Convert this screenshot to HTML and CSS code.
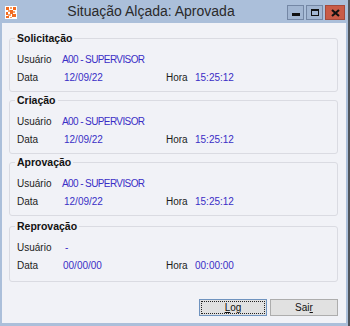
FILE: index.html
```html
<!DOCTYPE html>
<html lang="pt-BR">
<head>
    <meta charset="UTF-8">
    <title>Situação Alçada</title>
    <link rel="stylesheet" href="styles.css">
</head>
<body>

    <div class="window">
        <!-- Title bar -->
        <div class="titlebar">
            <svg class="app-icon" width="12" height="13" viewBox="0 0 12 13">
                <rect width="12" height="13" fill="#fff"/>
                <rect x="1" y="1" width="3" height="3" fill="#f26b21"/>
                <rect x="5" y="1" width="2" height="2" fill="#f7a066"/>
                <rect x="8" y="1" width="3" height="3" fill="#f26b21"/>
                <rect x="3" y="4" width="2" height="2" fill="#f7a066"/>
                <rect x="5" y="4" width="3" height="4" fill="#f26b21"/>
                <rect x="8" y="5" width="2" height="2" fill="#f7a066"/>
                <rect x="1" y="6" width="2" height="3" fill="#f26b21"/>
                <rect x="3" y="8" width="3" height="2" fill="#f7a066"/>
                <rect x="7" y="8" width="4" height="3" fill="#f26b21"/>
                <rect x="1" y="10" width="3" height="2" fill="#f26b21"/>
                <rect x="5" y="11" width="2" height="1" fill="#f7a066"/>
            </svg>
            <div class="title">Situação Alçada: Aprovada</div>
            <div class="caption-buttons">
                <div class="cap-btn"><span class="glyph-min"></span></div>
                <div class="cap-btn"><span class="glyph-max"></span></div>
                <div class="cap-btn close">
                    <svg width="9" height="8" viewBox="0 0 9 8">
                        <path d="M1 1 L8 7 M8 1 L1 7" stroke="#111" stroke-width="2.2"/>
                    </svg>
                </div>
            </div>
        </div>

        <!-- Client area -->
        <div class="client">
            <fieldset class="group">
                <legend>Solicitação</legend>
                <div class="row"><span class="label">Usuário</span><span class="value user">A00 - SUPERVISOR</span></div>
                <div class="row"><span class="label date">Data</span><span class="value date-val">12/09/22</span><span class="label hora">Hora</span><span class="value">15:25:12</span></div>
            </fieldset>

            <fieldset class="group">
                <legend>Criação</legend>
                <div class="row"><span class="label">Usuário</span><span class="value user">A00 - SUPERVISOR</span></div>
                <div class="row"><span class="label date">Data</span><span class="value date-val">12/09/22</span><span class="label hora">Hora</span><span class="value">15:25:12</span></div>
            </fieldset>

            <fieldset class="group">
                <legend>Aprovação</legend>
                <div class="row"><span class="label">Usuário</span><span class="value user">A00 - SUPERVISOR</span></div>
                <div class="row"><span class="label date">Data</span><span class="value date-val">12/09/22</span><span class="label hora">Hora</span><span class="value">15:25:12</span></div>
            </fieldset>

            <fieldset class="group last">
                <legend>Reprovação</legend>
                <div class="row"><span class="label">Usuário</span><span class="value dash">-</span></div>
                <div class="row"><span class="label date">Data</span><span class="value date-val zero">00/00/00</span><span class="label hora">Hora</span><span class="value">00:00:00</span></div>
            </fieldset>

            <div class="actions">
                <button class="btn focused"><span class="focus-ring"><u>L</u>og</span></button>
                <button class="btn">Sai<u>r</u></button>
            </div>
        </div>
    </div>

</body>
</html>
```

FILE: styles.css
```css
body {
    margin: 0;
    background-color: #50555d;
    font-family: 'Liberation Sans', Arial, sans-serif;
    width: 350px;
    height: 326px;
    overflow: hidden;
}

/* Window frame */
.window {
    width: 348px;
    height: 326px;
    box-sizing: border-box;
    background-color: #abbfda;
    padding: 0 2px 3px 2px;
    display: flex;
    flex-direction: column;
}

/* Title bar */
.titlebar {
    height: 23px;
    display: flex;
    align-items: center;
}

.app-icon {
    margin-left: 3px;
    margin-top: 2px;
    flex: none;
}

.title {
    flex: 1;
    text-align: center;
    font-size: 14px;
    color: #2a2a2a;
    line-height: 23px;
    padding-right: 2px;
}

.caption-buttons {
    display: flex;
    gap: 2px;
    margin-right: 1px;
    margin-top: 2px;
}

.cap-btn {
    width: 15px;
    height: 13px;
    border: 1px solid #7487a5;
    background-color: #a2b6d2;
    display: flex;
    align-items: center;
    justify-content: center;
}

.cap-btn.close {
    width: 18px;
    background-color: #c95b47;
    border-color: #a4493b;
}

.glyph-min {
    width: 8px;
    height: 3px;
    background-color: #111;
    margin-top: 4px;
}

.glyph-max {
    width: 6px;
    height: 4px;
    border: 1px solid #111;
    border-top-width: 2px;
}

/* Client area */
.client {
    flex: 1;
    background-color: #f1f2f7;
    display: flex;
    flex-direction: column;
    padding-top: 9px;
}

.group {
    margin: 0 8px 2px 7px;
    padding: 5px 7px 5px 7px;
    border: 1px solid #dadbe2;
    border-radius: 3px;
    min-width: 0;
}

.group.last {
    margin-top: 2px;
    padding-bottom: 7px;
}

.group legend {
    font-size: 10.5px;
    font-weight: bold;
    color: #111;
    line-height: 13px;
    padding: 0 2px;
    margin-left: -2px;
}

.row {
    display: flex;
    height: 18px;
    align-items: center;
    font-size: 10px;
}

.label {
    color: #1c1c1c;
    width: 45px;
    flex: none;
}

.label.date {
    width: 47px;
}

.label.hora {
    width: 29px;
}

.value {
    color: #3a2ec6;
}

.value.user {
    letter-spacing: -0.6px;
}

.value.dash {
    margin-left: 3px;
}

.value.date-val {
    width: 102px;
    flex: none;
}

.value.zero {
    margin-left: -1px;
    width: 103px;
}

/* Bottom buttons */
.actions {
    margin-top: auto;
    display: flex;
    justify-content: flex-end;
    gap: 3px;
    padding: 0 8px 7px 0;
}

.btn {
    width: 68px;
    height: 17px;
    padding: 0;
    font-family: 'Liberation Sans', Arial, sans-serif;
    font-size: 10px;
    color: #111;
    background-color: #e1e1e1;
    border: 1px solid #adadad;
    display: flex;
    align-items: center;
    justify-content: center;
}

.btn.focused {
    border-color: #6f93bf;
    padding: 1px;
}

.focus-ring {
    width: 100%;
    height: 100%;
    box-sizing: border-box;
    border: 1px dotted #222;
    display: flex;
    align-items: center;
    justify-content: center;
}
```
